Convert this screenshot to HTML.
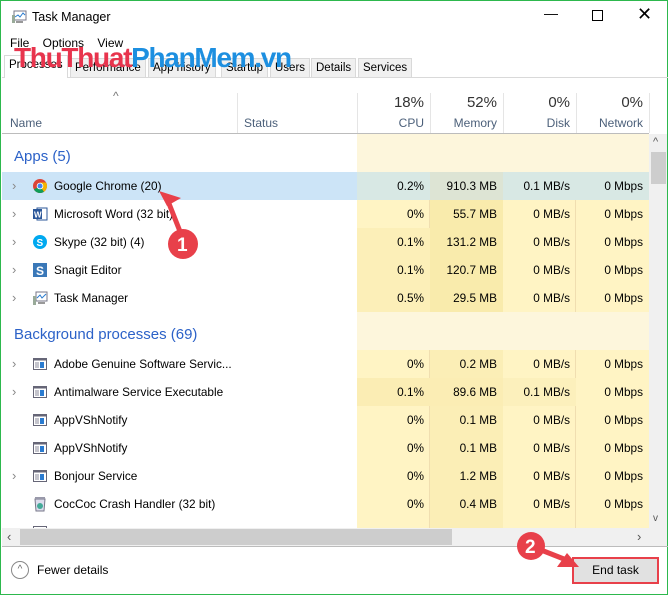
<!DOCTYPE html>
<html><head><meta charset="utf-8"><style>
*{box-sizing:border-box;margin:0;padding:0}
body{width:668px;height:595px;overflow:hidden;background:#fff;font-family:"Liberation Sans",sans-serif;font-size:12px;color:#000;position:relative}
.win{position:absolute;left:0;top:0;width:668px;height:595px;border:1px solid #2db84d}
.abs{position:absolute}
.tab{position:absolute;top:57px;height:20px;border:1px solid #d9d9d9;background:#f0f0f0;font-size:11.5px;line-height:18px;padding:0 4px}
.hdr{position:absolute;color:#4c607a;font-size:12px}
.col{position:absolute;top:133px;height:394px}
.row{position:absolute;left:1px;width:647px;height:28px}
.row .n{position:absolute;left:52px;top:7px;font-size:11.8px;white-space:nowrap}
.row .ch{position:absolute;left:10px;top:6px;color:#888;font-size:13px}
.row .ic{position:absolute;left:30px;top:6px;width:16px;height:16px}
.v{position:absolute;top:7px;text-align:right;font-size:11.8px}
.grp{position:absolute;left:13px;color:#2c62c8;font-size:15px}
.vl{position:absolute;top:92px;width:1px;height:40px;background:#e5e5e5}
</style></head><body><div class="win">
<svg class="abs" style="left:10px;top:9px" width="16" height="14"><rect x="3" y="1" width="12" height="9" fill="#fff" stroke="#778"/><polyline points="4,7 7,5 9,7 12,3 14,5" fill="none" stroke="#2a7bd0"/><rect x="1" y="5" width="3" height="8" fill="#9a9"/><rect x="5" y="11" width="7" height="2" fill="#999"/></svg>
<div class="abs" style="left:31px;top:9px;font-size:12.5px">Task Manager</div>
<div class="abs" style="left:543px;top:4px;font-size:14px">—</div>
<div class="abs" style="left:591px;top:9px;width:11px;height:11px;border:1px solid #000"></div>
<div class="abs" style="left:636px;top:3px;font-size:18px">✕</div>
<div class="abs" style="left:9px;top:35px;font-size:12px">File&nbsp;&nbsp;&nbsp;&nbsp;Options&nbsp;&nbsp;&nbsp;&nbsp;View</div>
<div class="abs" style="left:1px;top:76px;width:666px;height:1px;background:#d9d9d9"></div>
<div class="tab" style="left:3px;top:54px;height:23px;background:#fff;border-bottom:none">Processes</div>
<div class="tab" style="left:69px">Performance</div>
<div class="tab" style="left:147px">App history</div>
<div class="tab" style="left:220px">Startup</div>
<div class="tab" style="left:269px">Users</div>
<div class="tab" style="left:310px">Details</div>
<div class="tab" style="left:357px">Services</div>
<div class="abs" style="left:13px;top:42px;font-size:28px;font-weight:bold;letter-spacing:-1.3px;white-space:nowrap;line-height:30px"><span style="color:#e8344d">ThuThuat</span><span style="color:#1d8fe0">PhanMem.vn</span></div>
<div class="abs" style="left:112px;top:88px;color:#777;font-size:12px">^</div>
<div class="vl" style="left:236px"></div><div class="vl" style="left:356px"></div><div class="vl" style="left:429px"></div><div class="vl" style="left:502px"></div><div class="vl" style="left:575px"></div><div class="vl" style="left:648px"></div>
<div class="hdr" style="left:9px;top:115px">Name</div>
<div class="hdr" style="left:243px;top:115px">Status</div>
<div class="abs" style="left:356px;top:93px;width:67px;text-align:right;font-size:15px;color:#333">18%</div>
<div class="abs" style="left:429px;top:93px;width:67px;text-align:right;font-size:15px;color:#333">52%</div>
<div class="abs" style="left:502px;top:93px;width:67px;text-align:right;font-size:15px;color:#333">0%</div>
<div class="abs" style="left:575px;top:93px;width:67px;text-align:right;font-size:15px;color:#333">0%</div>
<div class="hdr" style="left:356px;top:115px;width:67px;text-align:right">CPU</div>
<div class="hdr" style="left:429px;top:115px;width:67px;text-align:right">Memory</div>
<div class="hdr" style="left:502px;top:115px;width:67px;text-align:right">Disk</div>
<div class="hdr" style="left:575px;top:115px;width:67px;text-align:right">Network</div>
<div class="abs" style="left:1px;top:132px;width:647px;height:1px;background:#bcbcbc"></div>
<div class="col" style="left:356px;width:73px;background:#fff4c4;border-right:1px solid #f0deb0"></div>
<div class="col" style="left:429px;width:73px;background:#fff4c4;border-right:1px solid #f0deb0"></div>
<div class="col" style="left:502px;width:73px;background:#fff4c4;border-right:1px solid #f0deb0"></div>
<div class="col" style="left:575px;width:73px;background:#fff4c4"></div>
<div class="abs" style="left:356px;top:133px;width:292px;height:38px;background:#fdf6dc"></div>
<div class="abs" style="left:356px;top:311px;width:292px;height:38px;background:#fdf6dc"></div>
<div class="abs" style="left:429px;top:171px;width:73px;height:140px;background:#f9ebac"></div>
<div class="abs" style="left:429px;top:349px;width:73px;height:178px;background:#fbeeb6"></div>
<div class="abs" style="left:356px;top:227px;width:73px;height:84px;background:#fcefb8"></div>
<div class="abs" style="left:356px;top:377px;width:146px;height:28px;background:#fbedb4"></div>
<div class="abs" style="left:502px;top:377px;width:73px;height:28px;background:#fcf0bc"></div>
<div class="grp" style="top:147px">Apps (5)</div>
<div class="grp" style="top:325px">Background processes (69)</div>
<div class="abs" style="left:1px;top:171px;width:355px;height:28px;background:#cce4f7"></div>
<div class="abs" style="left:356px;top:171px;width:292px;height:28px;background:#d8e8e4"></div>
<div class="abs" style="left:429px;top:171px;width:73px;height:28px;background:#dde4d4"></div>

<div class="row" style="top:171px"><span class="ch">›</span><svg class="ic" viewBox="0 0 16 16"><circle cx="8" cy="8" r="7" fill="#db4437"/><path d="M8 8 L1.9 11.5 A7 7 0 0 0 12 13.7Z" fill="#0f9d58"/><path d="M8 8 L12 13.7 A7 7 0 0 0 14.1 4.5 L8 4.5Z" fill="#f4b400"/><circle cx="8" cy="8" r="3.3" fill="#fff"/><circle cx="8" cy="8" r="2.5" fill="#4285f4"/></svg><span class="n">Google Chrome (20)</span>
<span class="v" style="left:355px;width:67px">0.2%</span><span class="v" style="left:428px;width:67px">910.3 MB</span><span class="v" style="left:501px;width:67px">0.1 MB/s</span><span class="v" style="left:574px;width:67px">0 Mbps</span></div>
<div class="row" style="top:199px"><span class="ch">›</span><svg class="ic" viewBox="0 0 16 16"><rect x="5" y="2" width="10" height="12" fill="#fff" stroke="#2b579a"/><rect x="1" y="3" width="9" height="10" fill="#2b579a"/><text x="2" y="11.5" font-size="8" fill="#fff" font-weight="bold" font-family="Liberation Sans">W</text></svg><span class="n">Microsoft Word (32 bit)</span>
<span class="v" style="left:355px;width:67px">0%</span><span class="v" style="left:428px;width:67px">55.7 MB</span><span class="v" style="left:501px;width:67px">0 MB/s</span><span class="v" style="left:574px;width:67px">0 Mbps</span></div>
<div class="row" style="top:227px"><span class="ch">›</span><svg class="ic" viewBox="0 0 16 16"><circle cx="8" cy="8" r="7" fill="#00a9f0"/><text x="4.5" y="12" font-size="10" fill="#fff" font-weight="bold" font-family="Liberation Sans">S</text></svg><span class="n">Skype (32 bit) (4)</span>
<span class="v" style="left:355px;width:67px">0.1%</span><span class="v" style="left:428px;width:67px">131.2 MB</span><span class="v" style="left:501px;width:67px">0 MB/s</span><span class="v" style="left:574px;width:67px">0 Mbps</span></div>
<div class="row" style="top:255px"><span class="ch">›</span><svg class="ic" viewBox="0 0 16 16"><rect x="1" y="1" width="14" height="14" fill="#3a78b8"/><text x="4" y="13" font-size="12" fill="#fff" font-weight="bold" font-family="Liberation Sans">S</text></svg><span class="n">Snagit Editor</span>
<span class="v" style="left:355px;width:67px">0.1%</span><span class="v" style="left:428px;width:67px">120.7 MB</span><span class="v" style="left:501px;width:67px">0 MB/s</span><span class="v" style="left:574px;width:67px">0 Mbps</span></div>
<div class="row" style="top:283px"><span class="ch">›</span><svg class="ic" viewBox="0 0 16 16"><rect x="4" y="2" width="11" height="9" fill="#fff" stroke="#778"/><polyline points="5,8 8,5 10,8 14,4" fill="none" stroke="#2a7bd0"/><rect x="1" y="6" width="3" height="9" fill="#9a9"/><rect x="6" y="12" width="7" height="2" fill="#999"/></svg><span class="n">Task Manager</span>
<span class="v" style="left:355px;width:67px">0.5%</span><span class="v" style="left:428px;width:67px">29.5 MB</span><span class="v" style="left:501px;width:67px">0 MB/s</span><span class="v" style="left:574px;width:67px">0 Mbps</span></div>

<div class="row" style="top:349px"><span class="ch">›</span><svg class="ic" viewBox="0 0 16 16"><rect x="1.5" y="2.5" width="13" height="11" fill="#fff" stroke="#667"/><rect x="1.5" y="2.5" width="13" height="2" fill="#667"/><rect x="8" y="6" width="4" height="6" fill="#2a7bd0"/><line x1="3" y1="7" x2="7" y2="7" stroke="#889"/><line x1="3" y1="9" x2="7" y2="9" stroke="#889"/><line x1="3" y1="11" x2="7" y2="11" stroke="#889"/></svg><span class="n">Adobe Genuine Software Servic...</span>
<span class="v" style="left:355px;width:67px">0%</span><span class="v" style="left:428px;width:67px">0.2 MB</span><span class="v" style="left:501px;width:67px">0 MB/s</span><span class="v" style="left:574px;width:67px">0 Mbps</span></div>
<div class="row" style="top:377px"><span class="ch">›</span><svg class="ic" viewBox="0 0 16 16"><rect x="1.5" y="2.5" width="13" height="11" fill="#fff" stroke="#667"/><rect x="1.5" y="2.5" width="13" height="2" fill="#667"/><rect x="8" y="6" width="4" height="6" fill="#2a7bd0"/><line x1="3" y1="7" x2="7" y2="7" stroke="#889"/><line x1="3" y1="9" x2="7" y2="9" stroke="#889"/><line x1="3" y1="11" x2="7" y2="11" stroke="#889"/></svg><span class="n">Antimalware Service Executable</span>
<span class="v" style="left:355px;width:67px">0.1%</span><span class="v" style="left:428px;width:67px">89.6 MB</span><span class="v" style="left:501px;width:67px">0.1 MB/s</span><span class="v" style="left:574px;width:67px">0 Mbps</span></div>
<div class="row" style="top:405px"><svg class="ic" viewBox="0 0 16 16"><rect x="1.5" y="2.5" width="13" height="11" fill="#fff" stroke="#667"/><rect x="1.5" y="2.5" width="13" height="2" fill="#667"/><rect x="8" y="6" width="4" height="6" fill="#2a7bd0"/><line x1="3" y1="7" x2="7" y2="7" stroke="#889"/><line x1="3" y1="9" x2="7" y2="9" stroke="#889"/><line x1="3" y1="11" x2="7" y2="11" stroke="#889"/></svg><span class="n">AppVShNotify</span>
<span class="v" style="left:355px;width:67px">0%</span><span class="v" style="left:428px;width:67px">0.1 MB</span><span class="v" style="left:501px;width:67px">0 MB/s</span><span class="v" style="left:574px;width:67px">0 Mbps</span></div>
<div class="row" style="top:433px"><svg class="ic" viewBox="0 0 16 16"><rect x="1.5" y="2.5" width="13" height="11" fill="#fff" stroke="#667"/><rect x="1.5" y="2.5" width="13" height="2" fill="#667"/><rect x="8" y="6" width="4" height="6" fill="#2a7bd0"/><line x1="3" y1="7" x2="7" y2="7" stroke="#889"/><line x1="3" y1="9" x2="7" y2="9" stroke="#889"/><line x1="3" y1="11" x2="7" y2="11" stroke="#889"/></svg><span class="n">AppVShNotify</span>
<span class="v" style="left:355px;width:67px">0%</span><span class="v" style="left:428px;width:67px">0.1 MB</span><span class="v" style="left:501px;width:67px">0 MB/s</span><span class="v" style="left:574px;width:67px">0 Mbps</span></div>
<div class="row" style="top:461px"><span class="ch">›</span><svg class="ic" viewBox="0 0 16 16"><rect x="1.5" y="2.5" width="13" height="11" fill="#fff" stroke="#667"/><rect x="1.5" y="2.5" width="13" height="2" fill="#667"/><rect x="8" y="6" width="4" height="6" fill="#2a7bd0"/><line x1="3" y1="7" x2="7" y2="7" stroke="#889"/><line x1="3" y1="9" x2="7" y2="9" stroke="#889"/><line x1="3" y1="11" x2="7" y2="11" stroke="#889"/></svg><span class="n">Bonjour Service</span>
<span class="v" style="left:355px;width:67px">0%</span><span class="v" style="left:428px;width:67px">1.2 MB</span><span class="v" style="left:501px;width:67px">0 MB/s</span><span class="v" style="left:574px;width:67px">0 Mbps</span></div>
<div class="row" style="top:489px"><svg class="ic" viewBox="0 0 16 16"><path d="M3 3 H13 L12 15 H4Z" fill="#dde" stroke="#778"/><circle cx="8" cy="10" r="3" fill="#4a9"/><rect x="3" y="1" width="10" height="2" fill="#99a"/></svg><span class="n">CocCoc Crash Handler (32 bit)</span>
<span class="v" style="left:355px;width:67px">0%</span><span class="v" style="left:428px;width:67px">0.4 MB</span><span class="v" style="left:501px;width:67px">0 MB/s</span><span class="v" style="left:574px;width:67px">0 Mbps</span></div>
<div class="row" style="top:517px;height:10px;overflow:hidden"><svg class="ic" viewBox="0 0 16 16"><rect x="1.5" y="2.5" width="13" height="11" fill="#fff" stroke="#667"/></svg></div>
<div class="abs" style="left:648px;top:133px;width:18px;height:394px;background:#f0f0f0"></div>
<div class="abs" style="left:652px;top:135px;color:#555;font-size:11px">^</div>
<div class="abs" style="left:650px;top:151px;width:15px;height:32px;background:#cdcdcd"></div>
<div class="abs" style="left:652px;top:512px;color:#555;font-size:10px">v</div>
<div class="abs" style="left:1px;top:527px;width:647px;height:18px;background:#f0f0f0"></div>
<div class="abs" style="left:19px;top:528px;width:432px;height:16px;background:#cdcdcd"></div>
<div class="abs" style="left:6px;top:528px;color:#555;font-size:13px">‹</div>
<div class="abs" style="left:636px;top:528px;color:#555;font-size:13px">›</div>
<div class="abs" style="left:648px;top:527px;width:18px;height:18px;background:#f0f0f0"></div>
<div class="abs" style="left:1px;top:545px;width:666px;height:1px;background:#bcbcbc"></div>
<div class="abs" style="left:10px;top:560px;width:18px;height:18px;border:1px solid #888;border-radius:50%;color:#666;font-size:10px;text-align:center;line-height:16px">^</div>
<div class="abs" style="left:36px;top:562px;font-size:12px">Fewer details</div>
<div class="abs" style="left:571px;top:556px;width:87px;height:27px;border:2px solid #e8404a;background:#e1e1e1;text-align:center;line-height:23px;font-size:12px">End task</div>
<svg class="abs" style="left:0;top:0" width="668" height="595">
<line x1="182" y1="238" x2="165" y2="195" stroke="#e8404a" stroke-width="5"/>
<polygon points="158,190 180,197 166,205" fill="#e8404a"/>
<circle cx="182" cy="243" r="15" fill="#e8404a"/>
<text x="176" y="250" font-size="19" fill="#fff" font-family="Liberation Sans" font-weight="bold">1</text>
<line x1="535" y1="547" x2="568" y2="560" stroke="#e8404a" stroke-width="5"/>
<polygon points="578,566 556,566 566,552" fill="#e8404a"/>
<circle cx="530" cy="545" r="14" fill="#e8404a"/>
<text x="524" y="552" font-size="19" fill="#fff" font-family="Liberation Sans" font-weight="bold">2</text>
</svg>
</div></body></html>
